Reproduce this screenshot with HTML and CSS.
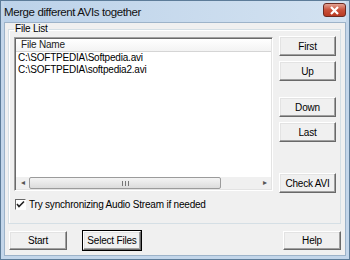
FILE: index.html
```html
<!DOCTYPE html>
<html lang="en">
<head>
    <meta charset="UTF-8">
    <title>Merge different AVIs together</title>
    <link rel="stylesheet" href="styles.css">
</head>
<body>

    <div class="window">
        <!-- Title bar -->
        <div class="titlebar">
            <span class="title">Merge different AVIs together</span>
            <div class="close">
                <svg width="11" height="9" viewBox="0 0 11 9">
                    <path d="M2 1 L9 8 M9 1 L2 8" stroke="#fff" stroke-width="2.2"/>
                </svg>
            </div>
        </div>

        <div class="client">
            <fieldset class="group">
                <legend>File List</legend>
                <div class="group-body">
                    <div class="list">
                        <div class="list-header"><span>File Name</span></div>
                        <div class="list-items">
                            <div class="item">C:\SOFTPEDIA\Softpedia.avi</div>
                            <div class="item">C:\SOFTPEDIA\softpedia2.avi</div>
                        </div>
                        <div class="hscroll">
                            <div class="arrow">&#9666;</div>
                            <div class="thumb"><span class="grip"></span></div>
                            <div class="track"></div>
                            <div class="arrow">&#9656;</div>
                        </div>
                    </div>
                    <div class="side">
                        <button class="btn">First</button>
                        <button class="btn">Up</button>
                        <button class="btn gap">Down</button>
                        <button class="btn">Last</button>
                        <button class="btn push">Check AVI</button>
                    </div>
                </div>
                <label class="check">
                    <span class="box">
                        <svg width="9" height="9" viewBox="0 0 9 9">
                            <path d="M1 4 L3 6.5 L8 1.5" stroke="#222" stroke-width="1.6" fill="none"/>
                        </svg>
                    </span>
                    Try synchronizing Audio Stream if needed
                </label>
            </fieldset>

            <div class="footer">
                <button class="btn wide">Start</button>
                <button class="btn wide default">Select Files</button>
                <span class="spacer"></span>
                <button class="btn wide">Help</button>
            </div>
        </div>
    </div>

</body>
</html>
```

FILE: styles.css
```css
body {
    margin: 0;
    font-family: "Liberation Sans", Arial, sans-serif;
    font-size: 10px;
    letter-spacing: -0.2px;
    color: #000;
}
.window {
    width: 350px;
    height: 260px;
    box-sizing: border-box;
    border: 1px solid #5d7c99;
    background: #c3d6ea;
    padding: 0 3px 3px 3px;
    display: flex;
    flex-direction: column;
}
.titlebar {
    height: 21px;
    display: flex;
    align-items: center;
    justify-content: space-between;
    background: linear-gradient(to right, #bcd2e9, #d3e2f1);
}
.title {
    font-size: 11.5px;
    letter-spacing: -0.4px;
    color: #111;
    padding-left: 0;
}
.close {
    width: 21px;
    height: 12px;
    margin-top: -3px;
    border: 1px solid #6b2a22;
    border-radius: 3px;
    background: linear-gradient(#e3a394, #c9503a 50%, #b83a22);
    display: flex;
    align-items: center;
    justify-content: center;
}
.client {
    flex: 1;
    background: #f0f0f0;
    border: 1px solid #9db3c9;
    display: flex;
    flex-direction: column;
    padding: 0 4px 0 3px;
}
.group {
    margin: 0;
    padding: 2px 3px 0 5px;
    height: 201px;
    box-sizing: border-box;
    border: 1px solid #d5dfe5;
    box-shadow: inset 1px 1px 0 #fff;
}
.group legend {
    padding: 0 1px;
    margin-left: 0;
    line-height: 12px;
}
.group-body {
    display: flex;
    gap: 6px;
}
.list {
    width: 259px;
    height: 154px;
    box-sizing: border-box;
    background: #fff;
    border: 1px solid;
    border-color: #a0a0a0 #fff #fff #a0a0a0;
    box-shadow: inset 1px 1px 0 #696969, inset -1px -1px 0 #e3e3e3;
    padding: 1px;
    display: flex;
    flex-direction: column;
}
.list-header {
    height: 12px;
    background: linear-gradient(#fff, #f3f3f3);
    border-bottom: 1px solid #d5d5d5;
    padding-left: 5px;
    line-height: 12px;
    color: #222;
}
.list-items {
    flex: 1;
}
.item {
    height: 12px;
    line-height: 12px;
    padding-left: 2px;
}
.hscroll {
    height: 12px;
    display: flex;
    background: #f0f0f0;
    align-items: stretch;
}
.hscroll .arrow {
    width: 13px;
    font-size: 8px;
    color: #555;
    text-align: center;
    line-height: 12px;
}
.thumb {
    width: 190px;
    border: 1px solid #9b9b9b;
    border-radius: 2px;
    background: linear-gradient(#f4f4f4, #dcdcdc);
    display: flex;
    align-items: center;
    justify-content: center;
}
.grip {
    width: 5px;
    height: 5px;
    border-left: 1px solid #777;
    border-right: 1px solid #777;
    background: linear-gradient(to right, transparent 2px, #777 2px, #777 3px, transparent 3px);
}
.track {
    flex: 1;
}
.side {
    display: flex;
    flex-direction: column;
    gap: 5px;
    height: 157px;
    margin-top: -1px;
}
.btn {
    width: 57px;
    height: 20px;
    padding: 0;
    font-family: "Liberation Sans", Arial, sans-serif;
    font-size: 10px;
    letter-spacing: -0.2px;
    white-space: nowrap;
    color: #000;
    background: #f0f0f0;
    border: 1px solid;
    border-color: #fff #696969 #696969 #fff;
    box-shadow: inset -1px -1px 0 #a0a0a0, inset 1px 1px 0 #e3e3e3;
}
.side .gap {
    margin-top: 11px;
}
.side .push {
    margin-top: auto;
}
.check {
    display: flex;
    align-items: center;
    gap: 3px;
    margin-top: 6px;
    padding-left: 1px;
}
.box {
    width: 9px;
    height: 9px;
    background: #fff;
    border: 1px solid;
    border-color: #696969 #fff #fff #696969;
    display: flex;
}
.footer {
    display: flex;
    gap: 16px;
    margin-top: 7px;
    padding-left: 1px;
}
.footer .wide {
    width: 58px;
    height: 19px;
}
.footer .default {
    outline: 1px solid #000;
}
.spacer {
    flex: 1;
}
```
